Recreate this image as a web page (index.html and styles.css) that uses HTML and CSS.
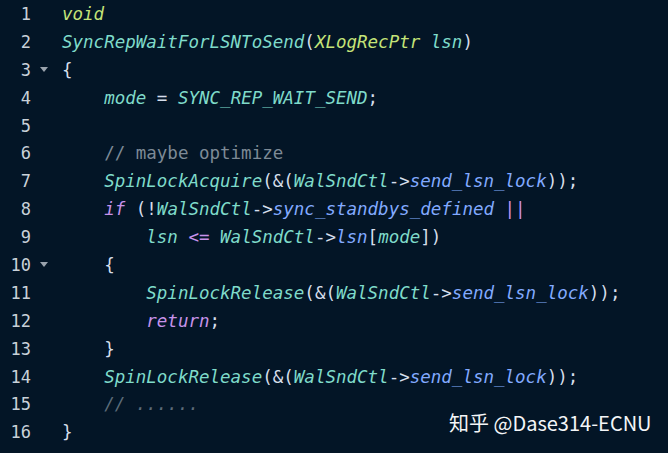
FILE: index.html
```html
<!DOCTYPE html>
<html>
<head>
<meta charset="utf-8">
<link rel="stylesheet" href="styles.css">
</head>
<body>
<div class="editor">
  <div class="row"><span class="ln">1</span><span class="fold"></span><span class="code"><span class="ty">void</span></span></div>
  <div class="row"><span class="ln">2</span><span class="fold"></span><span class="code"><span class="fn">SyncRepWaitForLSNToSend</span><span class="p">(</span><span class="ty">XLogRecPtr</span> <span class="fn">lsn</span><span class="p">)</span></span></div>
  <div class="row"><span class="ln">3</span><span class="fold"><i class="tri"></i></span><span class="code"><span class="p">{</span></span></div>
  <div class="row"><span class="ln">4</span><span class="fold"></span><span class="code">    <span class="fn">mode</span> <span class="p">=</span> <span class="fn">SYNC_REP_WAIT_SEND</span><span class="p">;</span></span></div>
  <div class="row"><span class="ln">5</span><span class="fold"></span><span class="code"></span></div>
  <div class="row"><span class="ln">6</span><span class="fold"></span><span class="code">    <span class="cm">// maybe optimize</span></span></div>
  <div class="row"><span class="ln">7</span><span class="fold"></span><span class="code">    <span class="fn">SpinLockAcquire</span><span class="p">(&amp;(</span><span class="fn">WalSndCtl</span><span class="p">-&gt;</span><span class="pr">send_lsn_lock</span><span class="p">));</span></span></div>
  <div class="row"><span class="ln">8</span><span class="fold"></span><span class="code">    <span class="kw">if</span> <span class="p">(!</span><span class="fn">WalSndCtl</span><span class="p">-&gt;</span><span class="pr">sync_standbys_defined</span> <span class="kw">||</span></span></div>
  <div class="row"><span class="ln">9</span><span class="fold"></span><span class="code">        <span class="fn">lsn</span> <span class="kw">&lt;=</span> <span class="fn">WalSndCtl</span><span class="p">-&gt;</span><span class="pr">lsn</span><span class="p">[</span><span class="fn">mode</span><span class="p">])</span></span></div>
  <div class="row"><span class="ln">10</span><span class="fold"><i class="tri"></i></span><span class="code">    <span class="p">{</span></span></div>
  <div class="row"><span class="ln">11</span><span class="fold"></span><span class="code">        <span class="fn">SpinLockRelease</span><span class="p">(&amp;(</span><span class="fn">WalSndCtl</span><span class="p">-&gt;</span><span class="pr">send_lsn_lock</span><span class="p">));</span></span></div>
  <div class="row"><span class="ln">12</span><span class="fold"></span><span class="code">        <span class="kw">return</span><span class="p">;</span></span></div>
  <div class="row"><span class="ln">13</span><span class="fold"></span><span class="code">    <span class="p">}</span></span></div>
  <div class="row"><span class="ln">14</span><span class="fold"></span><span class="code">    <span class="fn">SpinLockRelease</span><span class="p">(&amp;(</span><span class="fn">WalSndCtl</span><span class="p">-&gt;</span><span class="pr">send_lsn_lock</span><span class="p">));</span></span></div>
  <div class="row"><span class="ln">15</span><span class="fold"></span><span class="code">    <span class="cm2">// ......</span></span></div>
  <div class="row"><span class="ln">16</span><span class="fold"></span><span class="code"><span class="p">}</span></span></div>
</div>
<div class="watermark">知乎 @Dase314-ECNU</div>
</body>
</html>
```
FILE: styles.css
```css
html, body {
  margin: 0;
  padding: 0;
  background: #031526;
  width: 668px;
  height: 453px;
  overflow: hidden;
}
.editor {
  display: flex;
  flex-direction: column;
}
.row {
  display: flex;
  align-items: center;
  height: 27.9px;
}
.ln {
  width: 31px;
  text-align: right;
  font-family: "DejaVu Sans Mono", monospace;
  font-size: 17px;
  color: #c9d1d9;
}
.fold {
  width: 31px;
  display: flex;
  align-items: center;
  justify-content: flex-start;
  padding-left: 9px;
  box-sizing: border-box;
}
.tri {
  display: block;
  width: 0;
  height: 0;
  border-left: 4px solid transparent;
  border-right: 4px solid transparent;
  border-top: 5px solid #9aa3ad;
}
.code {
  white-space: pre;
  font-family: "DejaVu Sans Mono", monospace;
  font-size: 17.5px;
  font-style: italic;
  color: #d6deeb;
}
.ty { color: #c5e478; }
.fn { color: #7fdbca; }
.pr { color: #82aaff; }
.kw { color: #c792ea; }
.p { color: #d6deeb; font-style: normal; }
.cm { color: #7d8a96; font-style: normal; }
.cm2 { color: #5c6b78; }
.watermark {
  position: absolute;
  left: 449px;
  top: 408px;
  font-family: "Noto Sans CJK SC", "Noto Sans", sans-serif;
  font-size: 20px;
  color: #f4f6f8;
  white-space: pre;
}
```
